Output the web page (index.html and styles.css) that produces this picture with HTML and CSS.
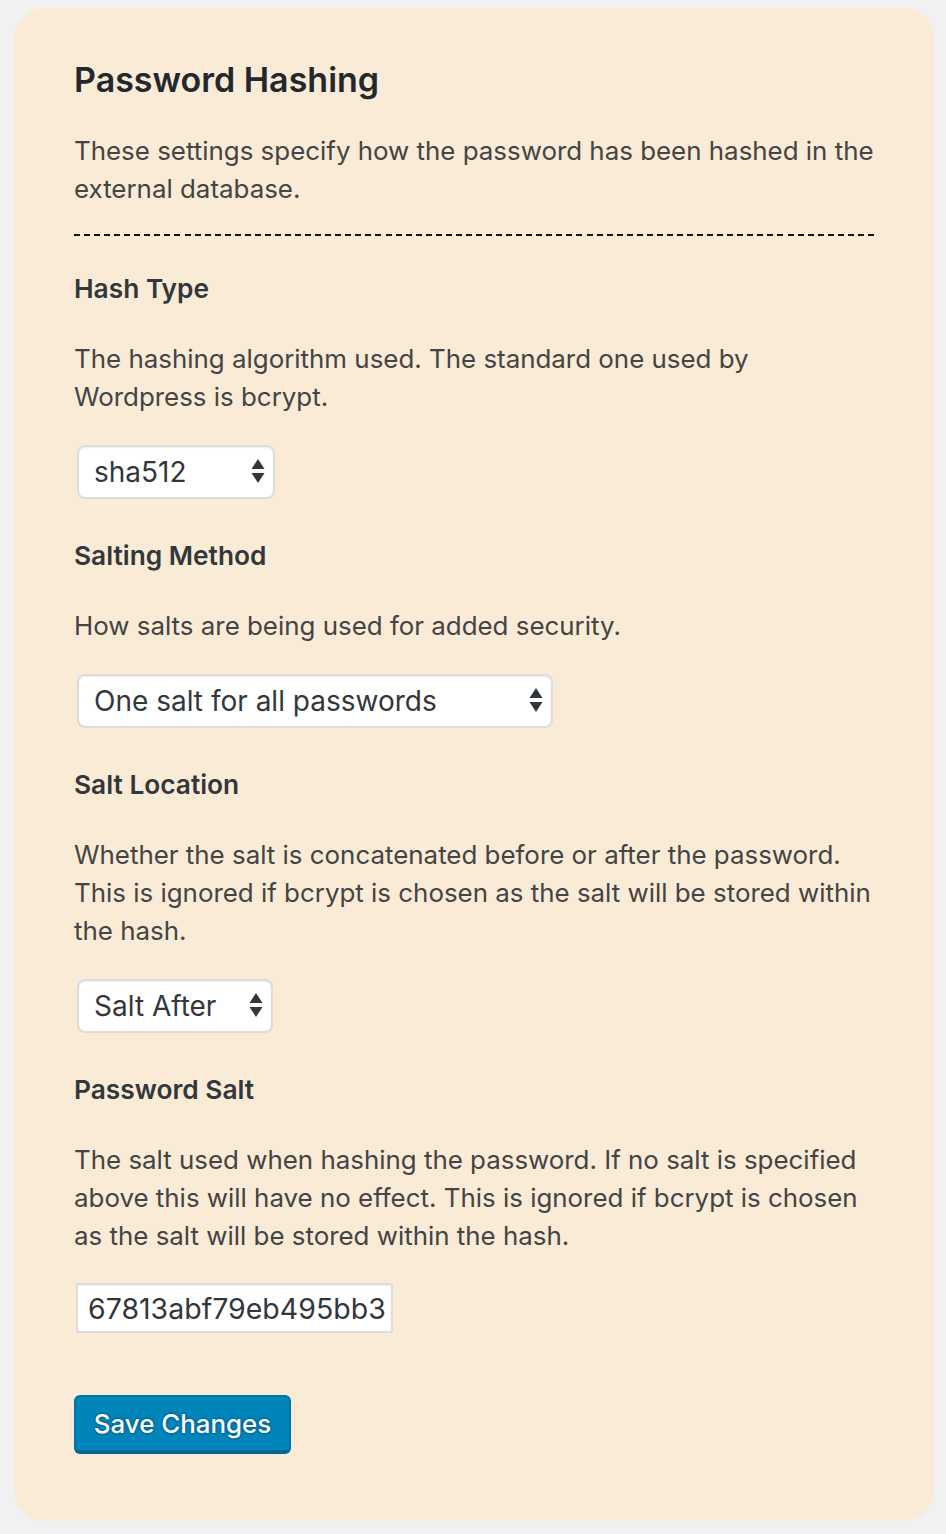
FILE: index.html
```html
<!DOCTYPE html>
<html lang="en">
<head>
<meta charset="utf-8">
<title>Password Hashing</title>
<link rel="stylesheet" href="styles.css">
</head>
<body>
<form class="card">
  <h2 class="title">Password Hashing</h2>
  <p class="text">These settings specify how the password has been hashed in the external database.</p>
  <hr class="divider">

  <div class="field">
    <label class="label" for="hash">Hash Type</label>
    <p class="text">The hashing algorithm used. The standard one used by Wordpress is bcrypt.</p>
    <select id="hash" class="select select-short">
      <option>sha512</option>
    </select>
  </div>

  <div class="field">
    <label class="label" for="method">Salting Method</label>
    <p class="text">How salts are being used for added security.</p>
    <select id="method" class="select select-long">
      <option>One salt for all passwords</option>
    </select>
  </div>

  <div class="field">
    <label class="label" for="loc">Salt Location</label>
    <p class="text">Whether the salt is concatenated before or after the password. This is ignored if bcrypt is chosen as the salt will be stored within the hash.</p>
    <select id="loc" class="select select-short2">
      <option>Salt After</option>
    </select>
  </div>

  <div class="field">
    <label class="label" for="salt">Password Salt</label>
    <p class="text">The salt used when hashing the password. If no salt is specified above this will have no effect. This is ignored if bcrypt is chosen as the salt will be stored within the hash.</p>
    <input id="salt" class="input" type="text" value="67813abf79eb495bb3">
  </div>

  <button type="button" class="button">Save Changes</button>
</form>
</body>
</html>
```

FILE: styles.css
```css
html, body {
  margin: 0;
  padding: 0;
  background: #f1f1f1;
}

body {
  padding: 8px 12px 12px 14px;
  font-family: Inter, "Noto Sans", "Liberation Sans", sans-serif;
}

.card {
  width: 920px;
  box-sizing: border-box;
  background: #faebd7;
  border-radius: 30px;
  padding: 52px 60px 69px 60px;
  display: flex;
  flex-direction: column;
  align-items: flex-start;
}

.title {
  margin: 0 0 32px 0;
  font-size: 34px;
  line-height: 40px;
  font-weight: 600;
  color: #23282d;
}

.text {
  margin: 0;
  font-size: 25.9px;
  line-height: 38px;
  color: #444;
  font-weight: 400;
}

.divider {
  align-self: stretch;
  margin: 26px 0 0 0;
  border: 0;
  height: 2px;
  background: repeating-linear-gradient(to right, #111 0, #111 6px, transparent 6px, transparent 10.05px);
}

.field {
  display: flex;
  flex-direction: column;
  align-items: flex-start;
  margin-top: 38px;
}

.divider + .field {
  margin-top: 34px;
}

.label {
  font-size: 26.3px;
  line-height: 38px;
  font-weight: 600;
  color: #32373c;
  margin-bottom: 32px;
}

.select {
  -webkit-appearance: none;
  appearance: none;
  margin: 29px 0 0 3px;
  height: 54px;
  box-sizing: border-box;
  border: 2px solid #dcdcdc;
  border-radius: 8px;
  background-color: #fff;
  background-image: url("data:image/svg+xml;utf8,<svg xmlns='http://www.w3.org/2000/svg' width='14' height='26' viewBox='0 0 14 26'><path d='M7 0 L13.5 10 L0.5 10 Z' fill='%2332373c'/><path d='M0.5 14 L13.5 14 L7 24 Z' fill='%2332373c'/></svg>");
  background-repeat: no-repeat;
  background-position: right 8px center;
  background-size: 14px 26px;
  box-shadow: inset 0 1px 2px rgba(0,0,0,0.07);
  font-family: Inter, "Noto Sans", "Liberation Sans", sans-serif;
  font-size: 28px;
  color: #32373c;
  padding: 0 40px 0 15px;
}

.select-short { width: 198px; }
.select-short2 { width: 196px; }
.select-long { width: 476px; }

.input {
  margin: 28px 0 0 2px;
  width: 317px;
  height: 50px;
  box-sizing: border-box;
  border: 2px solid #dddddd;
  background: #fff;
  box-shadow: inset 0 1px 2px rgba(0,0,0,0.07);
  font-family: Inter, "Noto Sans", "Liberation Sans", sans-serif;
  font-size: 28.5px;
  color: #32373c;
  padding: 0 4px 0 10px;
  outline: none;
}

.button {
  margin-top: 62px;
  height: 57px;
  width: 217px;
  box-sizing: border-box;
  background: #0085ba;
  border: 2px solid #0073aa;
  border-bottom-color: #006799;
  border-radius: 6px;
  box-shadow: 0 2px 0 #006799;
  color: #fff;
  font-family: Inter, "Noto Sans", "Liberation Sans", sans-serif;
  font-size: 25.9px;
  font-weight: 500;
  white-space: nowrap;
  text-shadow: 0 -1px 2px #006799, 1px 0 2px #006799, 0 1px 2px #006799, -1px 0 2px #006799;
  padding: 0 10px;
  cursor: pointer;
}
```
